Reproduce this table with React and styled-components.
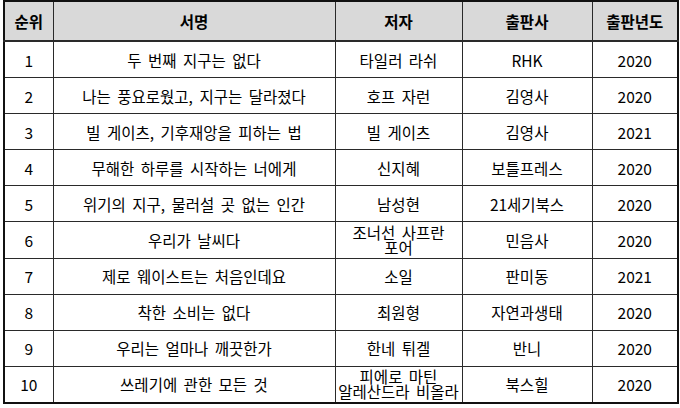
import React from "react";
import styled, { createGlobalStyle } from "styled-components";

const GlobalStyle = createGlobalStyle`
  html, body {
    margin: 0;
    padding: 0;
    background: #fff;
  }
  body {
    font-family: "Noto Sans CJK KR", "Noto Sans", sans-serif;
    color: #000;
  }
`;

const Page = styled.div`
  width: 680px;
  height: 408px;
  padding-left: 3px;
  box-sizing: border-box;
`;

const Table = styled.table`
  width: 674px;
  height: 404px;
  border-collapse: collapse;
  border: 2px solid #111;
  table-layout: fixed;
`;

const HeadCell = styled.th`
  background: #d9d9d9;
  border: 1px solid #2a2a2a;
  border-bottom: 2px solid #2a2a2a;
  font-size: 15.5px;
  font-weight: 700;
  height: 38px;
  padding: 0;
  text-align: center;
`;

const Cell = styled.td`
  border: 1px solid #2a2a2a;
  font-size: 15.5px;
  font-weight: 400;
  line-height: 18px;
  height: 35px;
  padding: 0;
  text-align: center;
  word-spacing: 3px;
  white-space: nowrap;
`;

const AuthorLine = styled.span`
  display: block;
  line-height: 15px;
`;

const columns = [
  { label: "순위", width: 49 },
  { label: "서명", width: 282 },
  { label: "저자", width: 127 },
  { label: "출판사", width: 130 },
  { label: "출판년도", width: 86 },
];

const books = [
  ["1", "두 번째 지구는 없다", ["타일러 라쉬"], "RHK", "2020"],
  ["2", "나는 풍요로웠고, 지구는 달라졌다", ["호프 자런"], "김영사", "2020"],
  ["3", "빌 게이츠, 기후재앙을 피하는 법", ["빌 게이츠"], "김영사", "2021"],
  ["4", "무해한 하루를 시작하는 너에게", ["신지혜"], "보틀프레스", "2020"],
  ["5", "위기의 지구, 물러설 곳 없는 인간", ["남성현"], "21세기북스", "2020"],
  ["6", "우리가 날씨다", ["조너선 사프란", "포어"], "민음사", "2020"],
  ["7", "제로 웨이스트는 처음인데요", ["소일"], "판미동", "2021"],
  ["8", "착한 소비는 없다", ["최원형"], "자연과생태", "2020"],
  ["9", "우리는 얼마나 깨끗한가", ["한네 튀겔"], "반니", "2020"],
  ["10", "쓰레기에 관한 모든 것", ["피에로 마틴", "알레산드라 비올라"], "북스힐", "2020"],
];

export default function App() {
  return (
    <Page>
      <GlobalStyle />
      <Table>
        <colgroup>
          {columns.map((c) => (
            <col key={c.label} style={{ width: c.width }} />
          ))}
        </colgroup>
        <thead>
          <tr>
            {columns.map((c) => (
              <HeadCell key={c.label}>{c.label}</HeadCell>
            ))}
          </tr>
        </thead>
        <tbody>
          {books.map(([rank, title, authors, publisher, year]) => (
            <tr key={rank}>
              <Cell>{rank}</Cell>
              <Cell>{title}</Cell>
              <Cell>
                {authors.length > 1
                  ? authors.map((a) => <AuthorLine key={a}>{a}</AuthorLine>)
                  : authors[0]}
              </Cell>
              <Cell>{publisher}</Cell>
              <Cell>{year}</Cell>
            </tr>
          ))}
        </tbody>
      </Table>
    </Page>
  );
}
